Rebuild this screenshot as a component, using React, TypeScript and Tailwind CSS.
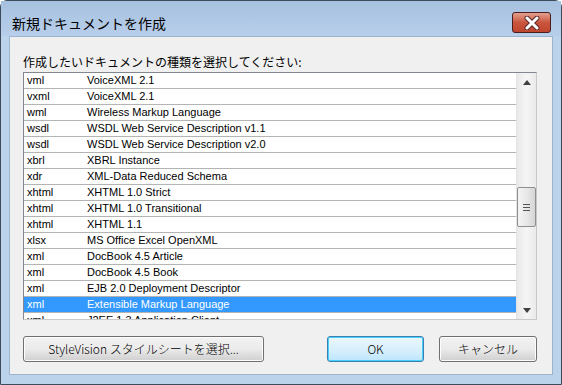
import React from 'react';

type Row = { ext: string; desc: string };

const rows: Row[] = [
  { ext: 'vml', desc: 'VoiceXML 2.1' },
  { ext: 'vxml', desc: 'VoiceXML 2.1' },
  { ext: 'wml', desc: 'Wireless Markup Language' },
  { ext: 'wsdl', desc: 'WSDL Web Service Description v1.1' },
  { ext: 'wsdl', desc: 'WSDL Web Service Description v2.0' },
  { ext: 'xbrl', desc: 'XBRL Instance' },
  { ext: 'xdr', desc: 'XML-Data Reduced Schema' },
  { ext: 'xhtml', desc: 'XHTML 1.0 Strict' },
  { ext: 'xhtml', desc: 'XHTML 1.0 Transitional' },
  { ext: 'xhtml', desc: 'XHTML 1.1' },
  { ext: 'xlsx', desc: 'MS Office Excel OpenXML' },
  { ext: 'xml', desc: 'DocBook 4.5 Article' },
  { ext: 'xml', desc: 'DocBook 4.5 Book' },
  { ext: 'xml', desc: 'EJB 2.0 Deployment Descriptor' },
  { ext: 'xml', desc: 'Extensible Markup Language' },
  { ext: 'xml', desc: 'J2EE 1.3 Application Client' },
];

const SELECTED = 14;

const CloseButton = () => (
  <div className="w-[39px] h-[21px] rounded-[3px] border border-[#4a1e1e] bg-gradient-to-b from-[#e4a08f] via-[#c9553d] to-[#c0452e] flex items-center justify-center">
    <svg width="16" height="14" viewBox="0 0 16 14">
      <path d="M3 2 L13 12 M13 2 L3 12" stroke="#5a2a2a" strokeWidth="5" strokeLinecap="round" />
      <path d="M3 2 L13 12 M13 2 L3 12" stroke="#ffffff" strokeWidth="3" strokeLinecap="round" />
    </svg>
  </div>
);

const ScrollBar = () => (
  <div className="w-[20px] h-full bg-gradient-to-r from-[#e9e9e9] via-[#f5f5f5] to-[#eaeaea] border-l border-[#e3e3e3] flex flex-col items-center">
    <div className="h-[18px] w-full flex items-center justify-center">
      <svg width="8" height="5" viewBox="0 0 8 5"><path d="M0 5 L4 0 L8 5 Z" fill="#404040" /></svg>
    </div>
    <div className="h-[96px]" />
    <div className="w-[19px] h-[40px] rounded-[2px] border border-[#8e8f8f] bg-gradient-to-r from-[#f4f4f4] via-[#e8e8e8] to-[#d6d6d6] flex flex-col items-center justify-center gap-[2px]">
      <div className="w-[7px] h-px bg-[#555]" />
      <div className="w-[7px] h-px bg-[#555]" />
      <div className="w-[7px] h-px bg-[#555]" />
    </div>
    <div className="flex-1" />
    <div className="h-[18px] w-full flex items-center justify-center">
      <svg width="8" height="5" viewBox="0 0 8 5"><path d="M0 0 L8 0 L4 5 Z" fill="#404040" /></svg>
    </div>
  </div>
);

const Button = ({ label, w, isDefault }: { label: string; w: string; isDefault?: boolean }) => (
  <div
    className={`${w} h-[26px] rounded-[3px] border flex items-center justify-center text-[12px] font-light text-black ${
      isDefault
        ? 'border-[#3c7fb1] shadow-[inset_0_0_0_1px_#48d0fd] bg-gradient-to-b from-[#eaf6fd] via-[#d9f0fc] to-[#bee6fd]'
        : 'border-[#707070] bg-gradient-to-b from-[#f2f2f2] via-[#ebebeb] to-[#cfcfcf] shadow-[inset_0_0_0_1px_#fcfcfc]'
    }`}
  >
    {label}
  </div>
);

export default function App() {
  return (
    <div className="w-[562px] h-[385px] overflow-hidden bg-white font-['Noto_Sans_CJK_JP',sans-serif]">
      <div className="w-full h-full rounded-t-[7px] border border-[#3c4a5a] bg-[#bcd3ec] flex flex-col">
        {/* Title bar */}
        <div className="h-[35px] flex items-start justify-between pl-[11px] pr-[10px] bg-gradient-to-b from-[#a6c0df] to-[#b7cfea]">
          <span className="mt-[12px] text-[14px] leading-[20px] text-black">新規ドキュメントを作成</span>
          <div className="mt-[11px]">
            <CloseButton />
          </div>
        </div>

        {/* Client area */}
        <div className="mx-[8px] h-[339px] bg-[#f0f0f0] border border-[#9db4cf] flex flex-col pl-[13px] pr-[15px]">
          <div className="mt-[16px] h-[18px] text-[12px] leading-[18px] text-black">
            作成したいドキュメントの種類を選択してください:
          </div>

          {/* List box */}
          <div className="mt-[1px] h-[248px] border border-[#828790] border-r-[#c9c9c9] border-b-[#c9c9c9] bg-white flex">
            <div className="flex-1 overflow-hidden font-['Liberation_Sans',sans-serif] text-[11px]">
              {rows.map((r, i) => (
                <div
                  key={i}
                  className={`h-[16px] flex items-center border-b border-[#b4b4b4] ${
                    i === SELECTED ? 'bg-[#3399ff] text-white' : 'text-black'
                  }`}
                >
                  <span className="w-[63px] pl-[3px]">{r.ext}</span>
                  <span>{r.desc}</span>
                </div>
              ))}
            </div>
            <ScrollBar />
          </div>

          {/* Buttons */}
          <div className="mt-[16px] flex items-center">
            <Button label="StyleVision スタイルシートを選択..." w="w-[241px]" />
            <div className="flex-1" />
            <Button label="OK" w="w-[97px]" isDefault />
            <div className="w-[15px]" />
            <Button label="キャンセル" w="w-[98px]" />
          </div>
        </div>
      </div>
    </div>
  );
}
